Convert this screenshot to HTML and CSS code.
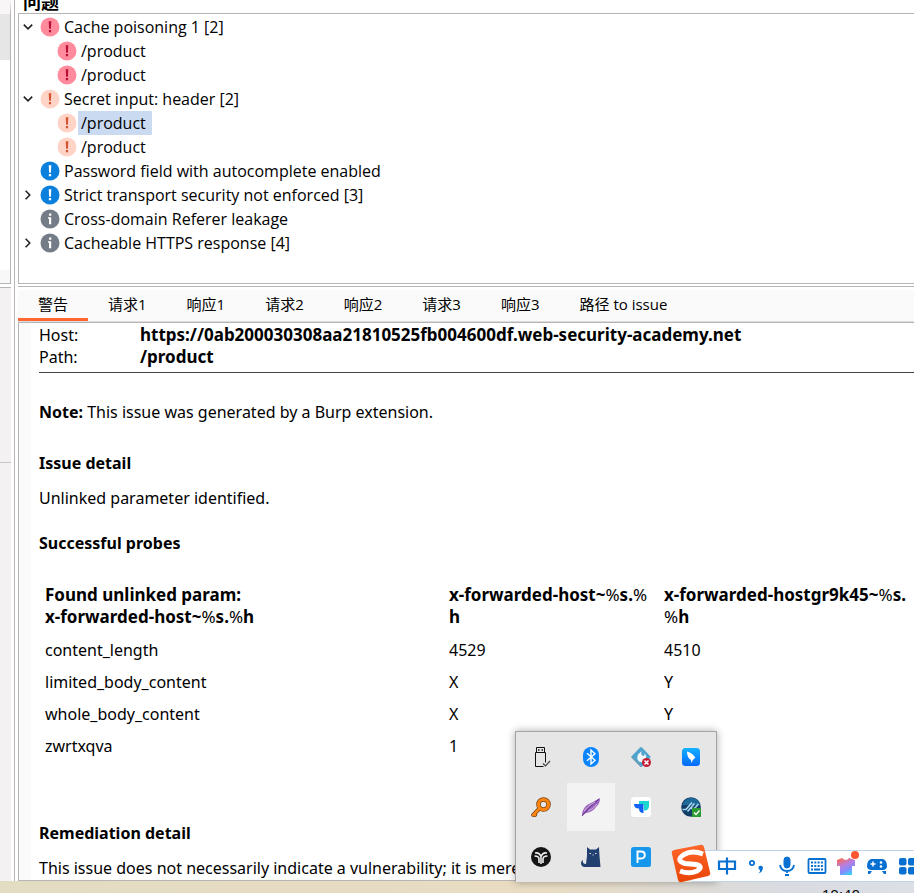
FILE: index.html
```
<!DOCTYPE html>
<html lang="zh-CN">
<head>
<meta charset="utf-8">
<title>问题</title>
<link rel="stylesheet" href="styles.css">
</head>
<body>
<svg class="defs" aria-hidden="true">
  <defs>
    <symbol id="alert" viewBox="0 0 20 20"><circle cx="10" cy="10" r="9.5" fill="var(--disc)"/><path d="M8.7 4.300h2.600l-.4 7.500H9.100zM8.900 13h2.200v2.300H8.900z" fill="var(--mark)"/></symbol>
    <symbol id="info" viewBox="0 0 20 20"><circle cx="10" cy="10" r="9.5" fill="var(--disc)"/><path d="M9 4.500h2.300v2.300H9zM8 8.300h3.200v7H9V9.800H8z" fill="var(--mark)"/></symbol>
    <symbol id="down" viewBox="0 0 10 10"><path d="M1.500 3L5 6.500 8.500 3" fill="none" stroke="#222" stroke-width="1.300"/></symbol>
    <symbol id="right" viewBox="0 0 10 10"><path d="M3 1.500L6.500 5 3 8.500" fill="none" stroke="#222" stroke-width="1.300"/></symbol>
  </defs>
</svg>
<div class="desktop">
  <div class="window">
    <aside class="side"><div class="side-scroll"></div><div class="side-list"></div><div class="side-foot"></div><div class="side-top"></div><div class="side-low"></div></aside>
    <main class="main">
      <h1 class="title">问题</h1>
      <ul class="tree">
        <li class="row"><button class="arrow" aria-label="折叠"><svg><use href="#down"/></svg></button><svg class="mark high"><use href="#alert"/></svg><span class="label">Cache poisoning 1 [2]</span></li>
        <li class="row child"><svg class="mark high"><use href="#alert"/></svg><span class="label">/product</span></li>
        <li class="row child"><svg class="mark high"><use href="#alert"/></svg><span class="label">/product</span></li>
        <li class="row"><button class="arrow" aria-label="折叠"><svg><use href="#down"/></svg></button><svg class="mark medium"><use href="#alert"/></svg><span class="label">Secret input: header [2]</span></li>
        <li class="row child"><svg class="mark medium"><use href="#alert"/></svg><span class="label selected">/product</span></li>
        <li class="row child"><svg class="mark medium"><use href="#alert"/></svg><span class="label">/product</span></li>
        <li class="row"><span class="arrow"></span><svg class="mark low"><use href="#alert"/></svg><span class="label">Password field with autocomplete enabled</span></li>
        <li class="row"><button class="arrow" aria-label="展开"><svg><use href="#right"/></svg></button><svg class="mark low"><use href="#alert"/></svg><span class="label">Strict transport security not enforced [3]</span></li>
        <li class="row"><span class="arrow"></span><svg class="mark note"><use href="#info"/></svg><span class="label">Cross-domain Referer leakage</span></li>
        <li class="row"><button class="arrow" aria-label="展开"><svg><use href="#right"/></svg></button><svg class="mark note"><use href="#info"/></svg><span class="label">Cacheable HTTPS response [4]</span></li>
      </ul>
      <div class="split"></div>
      <nav class="tabs">
        <button class="tab active">警告</button><button class="tab">请求1</button><button class="tab">响应1</button><button class="tab">请求2</button><button class="tab">响应2</button><button class="tab">请求3</button><button class="tab">响应3</button><button class="tab">路径 to issue</button>
      </nav>
      <article class="detail">
        <dl class="facts">
          <dt>Host:</dt><dd>https://0ab200030308aa21810525fb004600df.web-security-academy.net</dd>
          <dt>Path:</dt><dd>/product</dd>
        </dl>
        <p class="note-line"><b>Note:</b> This issue was generated by a Burp extension.</p>
        <h2>Issue detail</h2>
        <p>Unlinked parameter identified.</p>
        <h3>Successful probes</h3>
        <table class="probes">
          <thead><tr><th>Found unlinked param:<br>x-forwarded-host~<i>%</i>s.<i>%</i>h</th><th>x-forwarded-host~<i>%</i>s.<i>%</i><br>h</th><th>x-forwarded-hostgr9k45~<i>%</i>s.<br><i>%</i>h</th></tr></thead>
          <tbody>
            <tr><td>content_length</td><td>4529</td><td>4510</td></tr>
            <tr><td>limited_body_content</td><td>X</td><td>Y</td></tr>
            <tr><td>whole_body_content</td><td>X</td><td>Y</td></tr>
            <tr><td>zwrtxqva</td><td>1</td><td></td></tr>
          </tbody>
        </table>
        <h2 class="remedy">Remediation detail</h2>
        <p class="last">This issue does not necessarily indicate a vulnerability; it is merely</p>
      </article>
    </main>
  </div>
  <footer class="taskbar">
    <time class="clock">10:40</time>
    <div class="tray">
      <button aria-label="USB"><svg viewBox="0 0 20 20" fill="none" stroke="#111"><path d="M5.500.5h8v5h-8zM4.500 5.500h10v10M4.500 5.500v14h8"/><path d="M7 3h1.500M10.500 3H12" stroke-width="1.300"/><path d="M12 16.500l2.500 2.500 4.500-5" stroke="#444" stroke-width="1.200"/></svg></button>
      <button aria-label="Bluetooth"><svg viewBox="0 0 20 20"><rect x="2" width="16" height="20" rx="8" fill="#0a84ff"/><path d="M6 6.300l8 7-4 3.700V3l4 3.700-8 7" fill="none" stroke="#fff" stroke-width="1.400"/></svg></button>
      <button aria-label="Flame"><svg viewBox="0 0 20 20"><path d="M9 .5q1-1 2 0l8 8.500q1 1 0 2l-8 8.500q-1 1-2 0L.8 11q-1-1 0-2z" fill="#4fa3cf"/><path d="M11 4Q9 7 12 9q2 0 1.500-3 2.500 3 1.500 6-3 5-7 2.500-5-5 3-10.500" fill="#f4f7f8"/><path d="M1 10.500l9 9" stroke="#999"/><circle cx="15.500" cy="15.500" r="4.500" fill="#c31c32"/><path d="M13.500 13.500l4 4m0-4l-4 4" stroke="#fff" stroke-width="1.600"/></svg></button>
      <button aria-label="Bird"><svg viewBox="0 0 20 20"><defs><linearGradient id="bl" x2="0" y2="1"><stop stop-color="#13b1ff"/><stop offset="1" stop-color="#0468fb"/></linearGradient></defs><rect x="1" y="1" width="18" height="18" rx="3.500" fill="url(#bl)"/><path d="M6 4.500q6 1.500 8.500 6.500l-1.500.5-3 4.500v-3q-4-2-4-8.500" fill="#fff"/></svg></button>
      <button aria-label="Search"><svg viewBox="0 0 20 20" fill="none" stroke-linecap="round"><g stroke="#774411"><circle cx="12.500" cy="7.500" r="5" stroke-width="4.600"/><path d="M8.500 11.500l-6.300 6.300m1-1l1 1" stroke-width="4"/></g><g stroke="#ff8512"><circle cx="12.500" cy="7.500" r="5" stroke-width="3.200"/><path d="M8.500 11.500l-6.300 6.300m1-1l1 1" stroke-width="2.500"/></g></svg></button>
      <button class="hot" aria-label="Feather"><svg viewBox="0 0 20 20"><path d="M1 19Q1 12 6 8q6-3 13-7 0 6-4 9-3 5-10 6-2 1-4 3" fill="#9b65bf"/><path d="M1 19Q8 10 18 2" fill="none" stroke="#63318b"/><path d="M3 14Q6 9 14 5M7 14q6-2 9-7" stroke="#d0b3e1" fill="none"/></svg></button>
      <button aria-label="Docs"><svg viewBox="0 0 20 20"><rect width="20" height="20" rx="3.500" fill="#fff"/><path d="M8 4h10v5q0 3-3 4.500h-2V8H8z" fill="#1bd5d1"/><path d="M3 7h9.500v9Q8 16 8 11.500 3 11.500 3 7" fill="#1262f2"/></svg></button>
      <button aria-label="Sync"><svg viewBox="0 0 20 20"><circle cx="10" cy="10" r="9.800" fill="#133d67"/><path d="M1 8Q5-1 14 1.500 18 4 19 8z" fill="#1d6998"/><path d="M1.500 12.500H5l6-7M6.500 14.500l7-8M10 11.500h3.500l4-4.500" fill="none" stroke="#a2d5ed" stroke-width="1.700"/><rect x="11" y="11" width="9" height="9" fill="#2d9b32"/><path d="M13 15.500l2 2 3.500-4" fill="none" stroke="#fff" stroke-width="1.300"/></svg></button>
      <button aria-label="Disc"><svg viewBox="0 0 20 20"><circle cx="10" cy="10" r="10" fill="#151515"/><path d="M4 6q4-1 6 3.500Q12 5 16 6M10 9.500V17M3.500 9Q8 9 8 12v4M16.500 9Q12 9 12 12v4" fill="none" stroke="#eee" stroke-width="1.600"/></svg></button>
      <button aria-label="Cat"><svg viewBox="0 0 20 20"><path d="M6 0l3 2.500h6L18 0l.5 9 1 11H4q-4 0-4-4 0-2 2-3-1 4 3 4L6 9z" fill="#213f6f"/><path d="M8.500 6.500h1.500m4 0h1.500M11.500 8h1" stroke="#e7edf6" stroke-width="1.200"/></svg></button>
      <button aria-label="P"><svg viewBox="0 0 20 20"><rect width="20" height="20" rx="2.500" fill="#1797eb"/><path d="M6.500 16V4.500H10q3.800 0 3.800 3.500T10 11.500H6.500" fill="none" stroke="#fff" stroke-width="1.900"/></svg></button>
    </div>
    <div class="ime">
      <svg class="sogou" viewBox="0 0 40 40"><defs><linearGradient id="or" x2="0" y2="1"><stop stop-color="#ff672b"/><stop offset="1" stop-color="#e94407"/></linearGradient></defs><path d="M3 6L29 1q3-1 4 2l6 25q1 3-2 4L11 38q-3 1-4-2L1 10q-1-3 2-4" fill="url(#or)"/><path d="M32 10Q21 6 13 10.500q-9 6 1 9l11 1q8 2 1 6.500-8 3.500-17 0" fill="none" stroke="#fff" stroke-width="5"/></svg>
      <button aria-label="中文"><svg viewBox="0 0 20 20" fill="none" stroke="#0870d1" stroke-width="2.200"><path d="M2 5.500h16v7.500H2zM10 1.500v17"/></svg></button>
      <button aria-label="标点"><svg viewBox="0 0 20 20"><circle cx="5" cy="7" r="2.100" fill="none" stroke="#0870d1" stroke-width="1.800"/><path d="M11.500 10.500q2.500-1.500 4.500.5 0 5-4.500 6.500 2-2 1.500-3.500-2-1-1.500-3.500" fill="#0870d1"/></svg></button>
      <button aria-label="语音"><svg viewBox="0 0 20 20" fill="none" stroke="#0870d1"><rect x="7" y="1" width="6" height="11" rx="3" fill="#0870d1"/><path d="M3 9q1 6 7 6t7-6M10 15v2" stroke-width="1.800"/><path d="M8 19h4" stroke-width="2"/></svg></button>
      <button aria-label="键盘"><svg viewBox="0 0 20 20" fill="none" stroke="#0870d1" stroke-width="1.800"><rect x="1.500" y="3" width="17" height="14" rx="1"/><path d="M4 6.500h12M4 10h12" stroke-dasharray="2 1.300"/><path d="M4 13.500h2m1 0h6m1 0h2"/></svg></button>
      <button aria-label="皮肤"><svg class="shirt" viewBox="0 0 24 26"><defs><linearGradient id="sh" x1=".1" x2=".6" y2="1"><stop stop-color="#ff6848"/><stop offset=".45" stop-color="#ba7edc"/><stop offset=".75" stop-color="#858cff"/><stop offset="1" stop-color="#40cbfc"/></linearGradient></defs><path d="M2 9l5-2q4 4 7 0l6 2v6h-3v9H5v-9H2z" fill="url(#sh)"/><circle cx="20" cy="4" r="4" fill="#ff5630"/></svg></button>
      <button aria-label="游戏"><svg viewBox="0 0 20 20"><path d="M4 3h12q4 1 4 8-1 3-4 3H4q-3 0-4-3 0-7 4-8M1 15h4l-2 3H1zm18 0h-4l2 3h2z" fill="#0870d1"/><path d="M3.500 8h5M6 5.500v5" stroke="#fff" stroke-width="1.500"/><circle cx="14" cy="6.500" r="1.300" fill="#fff"/><circle cx="14" cy="10.500" r="1.300" fill="#fff"/></svg></button>
      <button aria-label="更多"><svg viewBox="0 0 20 20" fill="#0870d1"><rect x="2" y="2" width="7.500" height="7.500" rx="2"/><rect x="11" y="2" width="7.500" height="7.500" rx="2"/><rect x="2" y="11" width="7.500" height="7.500" rx="2"/><rect x="11" y="11" width="7.500" height="7.500" rx="2"/></svg></button>
    </div>
  </footer>
</div>
</body>
</html>
```
FILE: styles.css
```
* { box-sizing: border-box; }
body { margin: 0; overflow: hidden; background: #fff; color: #000; font: 16px/22px "Open Sans", "Noto Sans CJK SC", sans-serif; }
button { padding: 0; border: 0; background: none; font: inherit; color: inherit; }
svg { display: block; }
.defs { position: absolute; width: 0; height: 0; }
.desktop { display: flex; flex-direction: column; height: 100vh; }
.window { display: flex; flex: 1; min-height: 0; overflow: hidden; }

.side { display: flex; flex-direction: column; flex: none; width: 15px; padding-right: 3px; border-right: 1px solid #b8b4b6; }
.side-scroll { height: 60px; background: #e6e6e6; border-right: 1px solid #b8b4b6; border-top: 14px solid #f8f6f7; }
.side-list { height: 210px; border-right: 1px solid #b8b4b6; }
.side-foot { height: 14px; background: #f8f8f8; border: solid #b8b4b6; border-width: 0 1px 1px 0; }
.side-top { height: 176px; margin-top: 3px; background: #f3f1f2; border-top: 1px solid #b8b4b6; border-bottom: 1px solid #c8c5c7; }
.side-low { flex: 1; background: #f3f1f2; }

.main { display: flex; flex: 1; flex-direction: column; min-width: 0; margin-left: 3px; }
.title { display: flex; align-items: flex-end; height: 13px; margin: 0; padding-left: 5px; font-size: 18px; line-height: 22px; overflow: hidden; }
.tree { flex: none; margin: 0; padding: 1px 0 28px 3px; border: 1px solid #b8b4b6; border-right: 0; list-style: none; }
.row { display: flex; align-items: center; height: 24px; white-space: nowrap; }
.child { padding-left: 35px; }
.arrow { flex: none; width: 12px; height: 12px; margin-right: 6px; }
.arrow svg { width: 12px; height: 12px; }
.mark { flex: none; width: 20px; height: 20px; margin-right: 1px; }
.high { --disc: #ff8b9d; --mark: #b80f36; }
.medium { --disc: #ffd3c6; --mark: #d65331; }
.low { --disc: #0a7fdc; --mark: #fff; }
.note { --disc: #747d87; --mark: #fff; }
.label { padding: 0 6px 0 3px; line-height: 24px; }
.selected { background: #c9daf1; }
.split { flex: none; height: 4px; margin-top: 2px; border-top: 1px solid #b8b4b6; }

.tabs { display: flex; flex: none; height: 32px; background: #fafafa; border-bottom: 1px solid #ddd; white-space: nowrap; }
.tab { padding: 0 20px; border-bottom: 3px solid transparent; font-size: 15px; }
.active { border-bottom-color: #ff6633; }

.detail { flex: 1; min-height: 0; overflow: hidden; padding: 1px 0 0 20px; border: 1px solid #b8b4b6; border-right: 0; box-shadow: inset 12px 0 #fafafa; font-family: "Noto Sans", "Noto Sans CJK SC", sans-serif; }
.facts { display: grid; grid-template-columns: 101px 1fr; margin: 0; padding-bottom: 4px; border-bottom: 1px solid #444; white-space: nowrap; }
.facts dd { margin: 0; font-size: 17px; font-weight: bold; }
.detail p { margin: 0; white-space: nowrap; }
.detail .note-line { margin-top: 28px; }
.detail h2, .detail h3 { margin: 29px 0 13px; font-size: 16px; line-height: 22px; }
.detail h3 { margin: 23px 0 25px; }
.probes { border-collapse: collapse; width: 100%; table-layout: fixed; white-space: nowrap; }
.probes th, .probes td { padding: 5px 6px; text-align: left; vertical-align: top; }
.probes th { padding-bottom: 6px; font-size: 17px; }
.probes th:nth-child(1) { width: 404px; }
.probes th:nth-child(2) { width: 215px; }
.probes i { font-style: normal; font-weight: normal; }
.detail .remedy { margin-top: 60px; }

.taskbar { position: relative; flex: none; height: 12px; background: linear-gradient(90deg, #e2dcc3, #e9dcc3 60%, #d9dbe0 85%, #dcdfe6); }
.clock { display: block; height: 12px; margin: 0 54px 0 0; padding-top: 3px; text-align: right; font-size: 15px; line-height: 20px; overflow: hidden; }
.tray { position: absolute; right: 197px; bottom: 11px; display: grid; grid-template-columns: repeat(4, 50px); grid-auto-rows: 50px; border: 1px solid #a4a4a4; border-bottom: 0; background: #e6e6e6; box-shadow: 0 0 8px #0005; }
.tray button { display: grid; place-items: center; margin: 1px; }
.tray svg { width: 20px; height: 20px; }
.hot { background: #f3f3f3; }
.ime { position: absolute; right: 0; bottom: 11px; display: flex; align-items: center; width: 222px; height: 32px; padding-left: 20px; border: solid #bcd3ea; border-width: 1px 0; background: #fff; }
.ime button { display: grid; place-items: center; flex: none; width: 30px; height: 30px; }
.ime svg { width: 20px; height: 20px; }
.ime .shirt { width: 24px; height: 26px; margin-bottom: 4px; }
.ime .sogou { position: absolute; left: -21px; bottom: -3px; width: 40px; height: 40px; }
```
